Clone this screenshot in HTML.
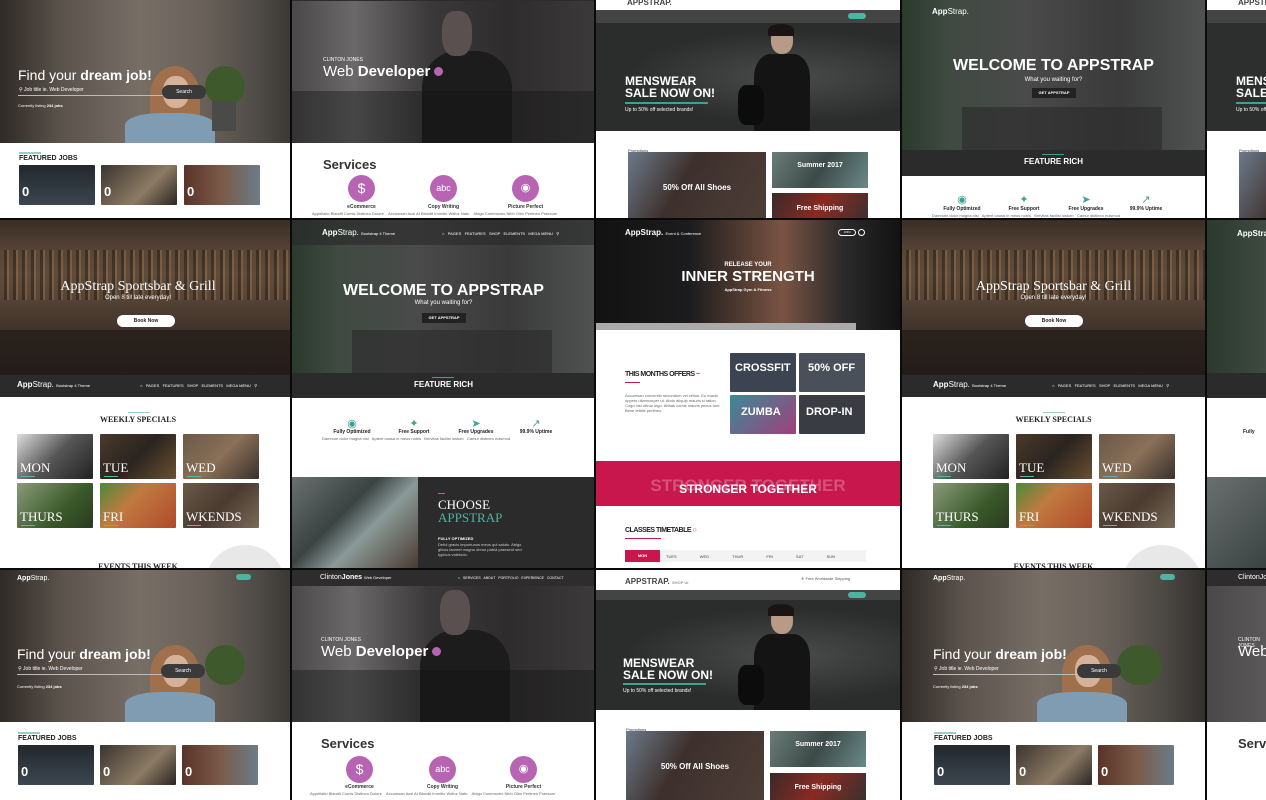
<!DOCTYPE html>
<html style="overflow:hidden;width:1266px;height:800px"><head><meta charset="utf-8"><style>
*{margin:0;padding:0;box-sizing:border-box}
body{width:1266px;height:800px;background:#0a0a0a;position:relative;overflow:hidden;font-family:"Liberation Sans",sans-serif}
.cell{position:absolute;overflow:hidden;background:#fff}
.c{position:absolute;left:0;width:310px;height:240px;background:#fff}
.a{position:absolute}
.w{color:#fff}
.b{font-weight:bold}
.t{font-size:5px;color:#666}
.card{position:absolute;border-radius:1px;overflow:hidden}
.card span{position:absolute;left:3px;bottom:6px;color:#fff;font-weight:bold;font-size:13px}
.circ{position:absolute;width:27px;height:27px;border-radius:50%;background:#b765b3;color:#fff;font-size:14px;text-align:center;line-height:27px}
.tile{position:absolute;width:76px;height:45px;border-radius:1px;overflow:hidden}
.tile span{position:absolute;left:3px;bottom:3px;color:#fff;font-family:"Liberation Serif",serif;font-size:13px}
.tile i{position:absolute;left:4px;bottom:2px;width:14px;height:1px;background:#5fb3a8}
.ic{position:absolute;color:#3fa291;font-size:11px;text-align:center;width:60px}
.off span{font-family:"Liberation Sans",sans-serif;font-weight:bold;font-size:11px}
</style></head><body>

<!-- ===== ROW 1 ===== -->
<div class="cell" style="left:0;top:0;width:290px;height:218px">
 <div class="c" style="top:-9px">
  <div class="a" style="left:0;top:0;width:310px;height:152px;background:linear-gradient(90deg,#2f2a26 0%,#5b534c 20%,#776e66 45%,#6a625a 65%,#4b4843 85%,#2e2c2a 100%)"></div>
  <div class="a" style="left:150px;top:75px;width:50px;height:60px;border-radius:50% 50% 20% 20%;background:#a0704c"></div>
  <div class="a" style="left:163px;top:85px;width:26px;height:32px;border-radius:45%;background:#d7b29a"></div>
  <div class="a" style="left:125px;top:122px;width:90px;height:30px;border-radius:40% 40% 0 0;background:#7f9cb2"></div>
  <div class="a" style="left:205px;top:75px;width:40px;height:40px;border-radius:50%;background:#3e5a2c"></div>
  <div class="a" style="left:212px;top:110px;width:24px;height:30px;background:#4a4a48"></div>
  <div class="a w" style="left:18px;top:76px;font-size:14px">Find your <b>dream job!</b></div>
  <div class="a w" style="left:19px;top:96px;font-size:5px">&#9906; Job title ie. Web Developer</div>
  <div class="a" style="left:18px;top:104px;width:160px;height:1px;background:#bbb"></div>
  <div class="a w" style="left:162px;top:94px;width:44px;height:14px;border-radius:7px;background:#3a3a3a;font-size:5px;text-align:center;line-height:14px">Search</div>
  <div class="a w" style="left:18px;top:112px;font-size:4px">Currently listing <b>234 jobs</b></div>
  <div class="a" style="left:19px;top:161px;width:22px;height:2px;background:#9fcbc5"></div>
  <div class="a b" style="left:19px;top:164px;font-size:7px;color:#222">FEATURED JOBS</div>
  <div class="card" style="left:19px;top:174px;width:76px;height:40px;background:linear-gradient(#22282c,#3c4650)"><span>0</span></div>
  <div class="card" style="left:101px;top:174px;width:76px;height:40px;background:linear-gradient(135deg,#3a352f,#8c7a64 60%,#2b2622)"><span>0</span></div>
  <div class="card" style="left:184px;top:174px;width:76px;height:40px;background:linear-gradient(90deg,#5a3328,#7a5a48 50%,#6b7c88)"><span>0</span></div>
 </div>
</div>

<div class="cell" style="left:292px;top:0;width:302px;height:218px">
 <div class="c" style="top:-9px">
  <div class="a" style="left:0;top:0;width:310px;height:152px;background:linear-gradient(90deg,#4a4848,#6a6868 20%,#3a3838 45%,#2e2c2c 70%,#3c3a3a)"></div>
  <div class="a" style="left:0;top:0;width:310px;height:10px;background:#2d2d2d"></div>
  <div class="a" style="left:130px;top:60px;width:90px;height:92px;border-radius:40% 40% 0 0;background:#1d1c1c"></div>
  <div class="a" style="left:150px;top:20px;width:30px;height:45px;border-radius:40%;background:#5a5050"></div>
  <div class="a" style="left:0;top:100px;width:310px;height:52px;background:rgba(20,20,20,.4)"></div>
  <div class="a w" style="left:31px;top:66px;font-size:5px">CLINTON JONES</div>
  <div class="a w" style="left:31px;top:72px;font-size:15px">Web <b>Developer</b> <span style="display:inline-block;width:9px;height:9px;border-radius:50%;background:#b765b3"></span></div>
  <div class="a b" style="left:31px;top:166px;font-size:13px;color:#333">Services</div>
  <div class="circ" style="left:56px;top:184px">$</div>
  <div class="circ" style="left:138px;top:184px;font-size:9px">abc</div>
  <div class="circ" style="left:220px;top:184px;font-size:11px">&#9673;</div>
  <div class="a b" style="left:42px;top:213px;width:55px;text-align:center;font-size:5px;color:#333">eCommerce</div>
  <div class="a b" style="left:124px;top:213px;width:55px;text-align:center;font-size:5px;color:#333">Copy Writing</div>
  <div class="a b" style="left:206px;top:213px;width:55px;text-align:center;font-size:5px;color:#333">Picture Perfect</div>
  <div class="a t" style="left:20px;top:220px;width:270px;font-size:4px">Appellatio Blandit Comis Distineo Dolore &nbsp;&nbsp; Accumsan Acsi At Blandit Immitto Wellor Natu &nbsp;&nbsp; Abigo Commoveo Nibh Olim Pertineo Praesum</div>
 </div>
</div>

<div class="cell" style="left:596px;top:0;width:304px;height:218px">
 <div class="c" style="top:-10px">
  <div class="a b" style="left:31px;top:8px;font-size:8px;color:#444">APPSTRAP.</div>
  <div class="a" style="left:0;top:20px;width:310px;height:13px;background:#444"></div>
  <div class="a" style="left:252px;top:23px;width:18px;height:6px;border-radius:3px;background:#4fb3a3"></div>
  <div class="a" style="left:0;top:33px;width:310px;height:108px;background:radial-gradient(ellipse at 62% 50%,#4a4b4b,#2b2c2c 60%)"></div>
  <div class="a" style="left:175px;top:36px;width:22px;height:28px;border-radius:45%;background:#b89a88"></div>
  <div class="a" style="left:172px;top:34px;width:26px;height:12px;border-radius:50% 50% 0 0;background:#1a1414"></div>
  <div class="a" style="left:158px;top:64px;width:56px;height:77px;border-radius:30% 30% 0 0;background:#141414"></div>
  <div class="a" style="left:142px;top:95px;width:26px;height:40px;border-radius:30%;background:#0c0c0c"></div>
  <div class="a w b" style="left:29px;top:85px;font-size:12px;line-height:12px">MENSWEAR<br>SALE NOW ON!</div>
  <div class="a" style="left:29px;top:112px;width:83px;height:2px;background:#3fa291"></div>
  <div class="a w" style="left:29px;top:117px;font-size:5px">Up to 50% off selected brands!</div>
  <div class="a" style="left:32px;top:158px;font-size:4px;color:#333">Promotions</div>
  <div class="a" style="left:32px;top:162px;width:138px;height:70px;background:linear-gradient(120deg,#6c7a8a,#3d302c 40%,#4e3e38)"></div>
  <div class="a w b" style="left:32px;top:193px;width:138px;text-align:center;font-size:8px">50% Off All Shoes</div>
  <div class="a" style="left:176px;top:162px;width:96px;height:36px;background:linear-gradient(120deg,#6a7d78,#3c4a48 50%,#6a8a88)"></div>
  <div class="a w b" style="left:176px;top:172px;width:96px;text-align:center;font-size:7px">Summer 2017</div>
  <div class="a" style="left:176px;top:203px;width:96px;height:30px;background:linear-gradient(120deg,#3a2a28,#8a2a22 50%,#3a3030)"></div>
  <div class="a w b" style="left:176px;top:215px;width:96px;text-align:center;font-size:7px">Free Shipping</div>
 </div>
</div>

<div class="cell" style="left:902px;top:0;width:303px;height:218px">
 <div class="c" style="top:-3px">
  <div class="a" style="left:0;top:0;width:310px;height:153px;background:linear-gradient(90deg,#2a3a2c,#3f4a42 15%,#4a4a4a 40%,#3a3a3a 70%,#525454)"></div>
  <div class="a" style="left:60px;top:110px;width:200px;height:43px;background:#2e2e2e;opacity:.7"></div>
  <div class="a w" style="left:30px;top:10px;font-size:8px"><b>App</b>Strap.</div>
  <div class="a w b" style="left:0;top:60px;width:303px;text-align:center;font-size:16px">WELCOME TO APPSTRAP</div>
  <div class="a w" style="left:0;top:80px;width:303px;text-align:center;font-size:6px">What you waiting for?</div>
  <div class="a w b" style="left:130px;top:91px;width:44px;height:10px;background:#222;font-size:4px;text-align:center;line-height:10px">GET APPSTRAP</div>
  <div class="a" style="left:0;top:153px;width:310px;height:26px;background:#2b2b2b"></div>
  <div class="a" style="left:140px;top:157px;width:22px;height:1px;background:#3fa291"></div>
  <div class="a w b" style="left:0;top:160px;width:303px;text-align:center;font-size:8px">FEATURE RICH</div>
  <div class="ic" style="left:30px;top:196px">&#9673;</div><div class="ic" style="left:92px;top:196px">&#10022;</div><div class="ic" style="left:154px;top:196px">&#10148;</div><div class="ic" style="left:214px;top:196px">&#8599;</div>
  <div class="a b" style="left:30px;top:209px;width:60px;text-align:center;font-size:5px;color:#222">Fully Optimized</div>
  <div class="a b" style="left:92px;top:209px;width:60px;text-align:center;font-size:5px;color:#222">Free Support</div>
  <div class="a b" style="left:154px;top:209px;width:60px;text-align:center;font-size:5px;color:#222">Free Upgrades</div>
  <div class="a b" style="left:214px;top:209px;width:60px;text-align:center;font-size:5px;color:#222">99.9% Uptime</div>
  <div class="a t" style="left:30px;top:216px;width:250px;font-size:4px">Damnum dolor magna nisi &nbsp; Aptent causa in meus nobis &nbsp; Brevitas facilisi iustum &nbsp; Camur distineo euismod</div>
 </div>
</div>

<div class="cell" style="left:1207px;top:0;width:59px;height:218px">
 <div class="c" style="top:-10px">
  <div class="a b" style="left:31px;top:8px;font-size:8px;color:#444">APPSTRAP.</div>
  <div class="a" style="left:0;top:20px;width:310px;height:13px;background:#444"></div>
  <div class="a" style="left:0;top:33px;width:310px;height:108px;background:#2d2e2e"></div>
  <div class="a w b" style="left:29px;top:85px;font-size:12px;line-height:12px">MENSWEAR<br>SALE NOW ON!</div>
  <div class="a" style="left:29px;top:112px;width:83px;height:2px;background:#3fa291"></div>
  <div class="a w" style="left:29px;top:117px;font-size:5px">Up to 50% off selected brands!</div>
  <div class="a" style="left:32px;top:158px;font-size:4px;color:#333">Promotions</div>
  <div class="a" style="left:32px;top:162px;width:138px;height:70px;background:linear-gradient(120deg,#6c7a8a,#3d302c 40%,#4e3e38)"></div>
 </div>
</div>

<!-- ===== ROW 2 ===== -->
<div class="cell" style="left:0;top:220px;width:290px;height:348px">
 <div class="c" style="top:0;height:348px">
  <div class="a" style="left:0;top:0;width:310px;height:155px;background:linear-gradient(180deg,#3a2e26,#6a5442 35%,#4a3a30 60%,#2a2420)"></div>
  <div class="a" style="left:0;top:30px;width:310px;height:50px;background:repeating-linear-gradient(90deg,#5a4636 0 4px,#2a2018 4px 7px,#8a6a48 7px 9px);opacity:.6"></div>
  <div class="a" style="left:0;top:110px;width:310px;height:45px;background:rgba(30,24,20,.6)"></div>
  <div class="a w" style="left:0;top:59px;width:276px;text-align:center;font-family:'Liberation Serif',serif;font-size:14px">AppStrap Sportsbar &amp; Grill</div>
  <div class="a w" style="left:0;top:75px;width:276px;text-align:center;font-size:6px">Open 8 till late everyday!</div>
  <div class="a b" style="left:117px;top:95px;width:58px;height:12px;border-radius:6px;background:#fff;color:#222;font-size:5px;text-align:center;line-height:12px">Book Now</div>
  <div class="a" style="left:0;top:155px;width:310px;height:22px;background:#2b2b2b"></div>
  <div class="a w" style="left:17px;top:160px;font-size:8px"><b>App</b>Strap. <span style="font-size:4px">Bootstrap 4 Theme</span></div>
  <div class="a w" style="left:140px;top:163px;font-size:4px">&#8962; &nbsp; PAGES &nbsp; FEATURES &nbsp; SHOP &nbsp; ELEMENTS &nbsp; MEGA MENU &nbsp; &#9906;</div>
  <div class="a" style="left:128px;top:192px;width:22px;height:1px;background:#9fcbc5"></div>
  <div class="a b" style="left:0;top:195px;width:276px;text-align:center;font-family:'Liberation Serif',serif;font-size:8px;color:#222">WEEKLY SPECIALS</div>
  <div class="tile" style="left:17px;top:214px;background:linear-gradient(135deg,#ddd,#555 50%,#222)"><span>MON</span><i></i></div>
  <div class="tile" style="left:100px;top:214px;background:linear-gradient(135deg,#4a3a2a,#2a2420 50%,#6a5030)"><span>TUE</span><i></i></div>
  <div class="tile" style="left:183px;top:214px;background:linear-gradient(135deg,#6a5a48,#8a7058 50%,#3a302a)"><span>WED</span><i></i></div>
  <div class="tile" style="left:17px;top:263px;background:linear-gradient(135deg,#8a9a7a,#3a5a2a 60%,#2a3a20)"><span>THURS</span><i></i></div>
  <div class="tile" style="left:100px;top:263px;background:linear-gradient(135deg,#4a8a3a,#c07a40 40%,#b04a2a)"><span>FRI</span><i></i></div>
  <div class="tile" style="left:183px;top:263px;background:linear-gradient(135deg,#6a5a48,#4a3a30 50%,#7a6a58)"><span>WKENDS</span><i></i></div>
  <div class="a" style="left:205px;top:325px;width:80px;height:80px;border-radius:50%;background:#e8e8e8"></div>
  <div class="a b" style="left:0;top:342px;width:276px;text-align:center;font-family:'Liberation Serif',serif;font-size:8px;color:#222">EVENTS THIS WEEK</div>
 </div>
</div>

<div class="cell" style="left:292px;top:220px;width:302px;height:348px">
 <div class="c" style="top:0;height:348px">
  <div class="a" style="left:0;top:0;width:310px;height:153px;background:linear-gradient(90deg,#2a3a2c,#3f4a42 15%,#4a4a4a 40%,#3a3a3a 70%,#525454)"></div>
  <div class="a" style="left:0;top:0;width:310px;height:25px;background:rgba(40,40,40,.6)"></div>
  <div class="a w" style="left:30px;top:8px;font-size:8px"><b>App</b>Strap. <span style="font-size:4px">Bootstrap 4 Theme</span></div>
  <div class="a w" style="left:150px;top:11px;font-size:4px">&#8962; &nbsp; PAGES &nbsp; FEATURES &nbsp; SHOP &nbsp; ELEMENTS &nbsp; MEGA MENU &nbsp; &#9906;</div>
  <div class="a" style="left:60px;top:110px;width:200px;height:43px;background:#2e2e2e;opacity:.7"></div>
  <div class="a w b" style="left:0;top:62px;width:303px;text-align:center;font-size:16px">WELCOME TO APPSTRAP</div>
  <div class="a w" style="left:0;top:80px;width:303px;text-align:center;font-size:6px">What you waiting for?</div>
  <div class="a w b" style="left:130px;top:93px;width:44px;height:10px;background:#222;font-size:4px;text-align:center;line-height:10px">GET APPSTRAP</div>
  <div class="a" style="left:0;top:153px;width:310px;height:25px;background:#2b2b2b"></div>
  <div class="a" style="left:140px;top:157px;width:22px;height:1px;background:#3fa291"></div>
  <div class="a w b" style="left:0;top:160px;width:303px;text-align:center;font-size:8px">FEATURE RICH</div>
  <div class="ic" style="left:30px;top:197px">&#9673;</div><div class="ic" style="left:92px;top:197px">&#10022;</div><div class="ic" style="left:154px;top:197px">&#10148;</div><div class="ic" style="left:214px;top:197px">&#8599;</div>
  <div class="a b" style="left:30px;top:209px;width:60px;text-align:center;font-size:5px;color:#222">Fully Optimized</div>
  <div class="a b" style="left:92px;top:209px;width:60px;text-align:center;font-size:5px;color:#222">Free Support</div>
  <div class="a b" style="left:154px;top:209px;width:60px;text-align:center;font-size:5px;color:#222">Free Upgrades</div>
  <div class="a b" style="left:214px;top:209px;width:60px;text-align:center;font-size:5px;color:#222">99.9% Uptime</div>
  <div class="a t" style="left:30px;top:216px;width:250px;font-size:4px;line-height:6px">Damnum dolor magna nisi &nbsp; Aptent causa in meus nobis &nbsp; Brevitas facilisi iustum &nbsp; Camur distineo euismod</div>
  <div class="a" style="left:0;top:257px;width:310px;height:91px;background:#2b2b2b"></div>
  <div class="a" style="left:0;top:257px;width:126px;height:91px;background:linear-gradient(135deg,#6a7070,#3a4242 40%,#8a9a98 60%,#4a3a30)"></div>
  <div class="a" style="left:146px;top:273px;width:7px;height:1px;background:#3fa291"></div>
  <div class="a w" style="left:146px;top:278px;font-family:'Liberation Serif',serif;font-size:13px;line-height:13px">CHOOSE<br><span style="color:#4fb3a3">APPSTRAP</span></div>
  <div class="a w b" style="left:146px;top:316px;font-size:4px">FULLY OPTIMIZED</div>
  <div class="a" style="left:146px;top:322px;font-size:4px;color:#ccc;width:90px;line-height:5px">Defui gravis importunus meus qui saluto. Abigo gilvus laoreet magna obruo patria praesent sed typicus valetudo.</div>
 </div>
</div>

<div class="cell" style="left:596px;top:220px;width:304px;height:348px">
 <div class="c" style="top:0;height:348px">
  <div class="a" style="left:0;top:0;width:310px;height:110px;background:linear-gradient(90deg,#121212,#1c1c1e 30%,#5a4034 50%,#7a5444 60%,#2a2a2a 80%,#101010)"></div>
  <div class="a" style="left:0;top:103px;width:260px;height:7px;background:#aaa"></div>
  <div class="a w" style="left:29px;top:8px;font-size:8px"><b>AppStrap.</b> <span style="font-size:4px">Event &amp; Conference</span></div>
  <div class="a w" style="left:242px;top:9px;width:18px;height:7px;border:1px solid #fff;border-radius:4px;font-size:3px;text-align:center;line-height:5px">JOIN</div>
  <div class="a" style="left:262px;top:9px;width:7px;height:7px;border:1px solid #fff;border-radius:50%"></div>
  <div class="a w b" style="left:0;top:42px;width:304px;text-align:center;font-size:6px">RELEASE YOUR</div>
  <div class="a w b" style="left:0;top:48px;width:304px;text-align:center;font-size:15px">INNER STRENGTH</div>
  <div class="a w b" style="left:0;top:67px;width:304px;text-align:center;font-size:4px">AppStrap Gym &amp; Fitness</div>
  <div class="a b" style="left:29px;top:151px;font-size:7px;color:#222;letter-spacing:-.5px">THIS MONTHS OFFERS <span style="color:#c8174c">~</span></div>
  <div class="a" style="left:29px;top:162px;width:15px;height:1px;background:#c8174c"></div>
  <div class="a t" style="left:29px;top:173px;width:100px;font-size:4px;line-height:5px">Accumsan conventio secundum vel velius. Eu macto oppeto ullamcorper ut. Abdo aliquip mauris si tation.<br>Cogo nisl obruo lego. Abbas comis mauris pecus tum. Bene letalis pertineo.</div>
  <div class="tile off" style="left:134px;top:133px;width:66px;height:39px;background:#3c4452"><span style="left:5px;top:9px">CROSSFIT</span></div>
  <div class="tile off" style="left:203px;top:133px;width:66px;height:39px;background:#4a505a"><span style="left:9px;top:9px">50% OFF</span></div>
  <div class="tile off" style="left:134px;top:175px;width:66px;height:39px;background:linear-gradient(135deg,#3a8a9a,#a0407a)"><span style="left:11px;top:11px">ZUMBA</span></div>
  <div class="tile off" style="left:203px;top:175px;width:66px;height:39px;background:#3a3c44"><span style="left:7px;top:11px">DROP-IN</span></div>
  <div class="a" style="left:0;top:241px;width:304px;height:45px;background:#c8174c"></div>
  <div class="a b" style="left:0;top:256px;width:304px;text-align:center;font-size:17px;color:rgba(255,255,255,.25)">STRONGER TOGETHER</div>
  <div class="a w b" style="left:0;top:262px;width:304px;text-align:center;font-size:12px">STRONGER TOGETHER</div>
  <div class="a b" style="left:29px;top:307px;font-size:7px;color:#222;letter-spacing:-.5px">CLASSES TIMETABLE <span style="color:#c8174c">&#9675;</span></div>
  <div class="a" style="left:29px;top:318px;width:36px;height:1px;background:#c8174c"></div>
  <div class="a" style="left:29px;top:330px;width:241px;height:12px;background:#f3f3f3"></div>
  <div class="a w b" style="left:29px;top:330px;width:35px;height:12px;background:#c8174c;font-size:4px;text-align:center;line-height:12px">MON</div>
  <div class="a" style="left:70px;top:334px;font-size:4px;color:#444;word-spacing:22px">TUES WED THUR FRI SAT SUN</div>
 </div>
</div>

<div class="cell" style="left:902px;top:220px;width:303px;height:348px">
 <div class="c" style="top:0;height:348px">
  <div class="a" style="left:0;top:0;width:310px;height:155px;background:linear-gradient(180deg,#3a2e26,#6a5442 35%,#4a3a30 60%,#2a2420)"></div>
  <div class="a" style="left:0;top:30px;width:310px;height:50px;background:repeating-linear-gradient(90deg,#5a4636 0 4px,#2a2018 4px 7px,#8a6a48 7px 9px);opacity:.6"></div>
  <div class="a" style="left:0;top:110px;width:310px;height:45px;background:rgba(30,24,20,.6)"></div>
  <div class="a w" style="left:0;top:59px;width:303px;text-align:center;font-family:'Liberation Serif',serif;font-size:14px">AppStrap Sportsbar &amp; Grill</div>
  <div class="a w" style="left:0;top:75px;width:303px;text-align:center;font-size:6px">Open 8 till late everyday!</div>
  <div class="a b" style="left:123px;top:95px;width:58px;height:12px;border-radius:6px;background:#fff;color:#222;font-size:5px;text-align:center;line-height:12px">Book Now</div>
  <div class="a" style="left:0;top:155px;width:310px;height:22px;background:#2b2b2b"></div>
  <div class="a w" style="left:31px;top:160px;font-size:8px"><b>App</b>Strap. <span style="font-size:4px">Bootstrap 4 Theme</span></div>
  <div class="a w" style="left:150px;top:163px;font-size:4px">&#8962; &nbsp; PAGES &nbsp; FEATURES &nbsp; SHOP &nbsp; ELEMENTS &nbsp; MEGA MENU &nbsp; &#9906;</div>
  <div class="a" style="left:141px;top:192px;width:22px;height:1px;background:#9fcbc5"></div>
  <div class="a b" style="left:0;top:195px;width:303px;text-align:center;font-family:'Liberation Serif',serif;font-size:8px;color:#222">WEEKLY SPECIALS</div>
  <div class="tile" style="left:31px;top:214px;background:linear-gradient(135deg,#ddd,#555 50%,#222)"><span>MON</span><i></i></div>
  <div class="tile" style="left:114px;top:214px;background:linear-gradient(135deg,#4a3a2a,#2a2420 50%,#6a5030)"><span>TUE</span><i></i></div>
  <div class="tile" style="left:197px;top:214px;background:linear-gradient(135deg,#6a5a48,#8a7058 50%,#3a302a)"><span>WED</span><i></i></div>
  <div class="tile" style="left:31px;top:263px;background:linear-gradient(135deg,#8a9a7a,#3a5a2a 60%,#2a3a20)"><span>THURS</span><i></i></div>
  <div class="tile" style="left:114px;top:263px;background:linear-gradient(135deg,#4a8a3a,#c07a40 40%,#b04a2a)"><span>FRI</span><i></i></div>
  <div class="tile" style="left:197px;top:263px;background:linear-gradient(135deg,#6a5a48,#4a3a30 50%,#7a6a58)"><span>WKENDS</span><i></i></div>
  <div class="a" style="left:220px;top:325px;width:80px;height:80px;border-radius:50%;background:#e8e8e8"></div>
  <div class="a b" style="left:0;top:342px;width:303px;text-align:center;font-family:'Liberation Serif',serif;font-size:8px;color:#222">EVENTS THIS WEEK</div>
 </div>
</div>

<div class="cell" style="left:1207px;top:220px;width:59px;height:348px">
 <div class="a" style="left:0;top:0;width:59px;height:153px;background:linear-gradient(90deg,#2a3a2c,#3f4a42)"></div>
 <div class="a w b" style="left:30px;top:9px;font-size:8px">AppStrap</div>
 <div class="a" style="left:0;top:153px;width:59px;height:25px;background:#2b2b2b"></div>
 <div class="a b" style="left:36px;top:209px;font-size:5px;color:#222">Fully</div>
 <div class="a" style="left:0;top:257px;width:59px;height:91px;background:linear-gradient(135deg,#6a7070,#3a4242)"></div>
</div>

<!-- ===== ROW 3 ===== -->
<div class="cell" style="left:0;top:570px;width:290px;height:230px">
 <div class="c" style="top:0;height:230px">
  <div class="a" style="left:0;top:0;width:310px;height:152px;background:linear-gradient(90deg,#2f2a26 0%,#5b534c 20%,#776e66 45%,#6a625a 65%,#4b4843 85%,#2e2c2a 100%)"></div>
  <div class="a" style="left:150px;top:75px;width:50px;height:60px;border-radius:50% 50% 20% 20%;background:#a0704c"></div>
  <div class="a" style="left:163px;top:85px;width:26px;height:32px;border-radius:45%;background:#d7b29a"></div>
  <div class="a" style="left:125px;top:122px;width:90px;height:30px;border-radius:40% 40% 0 0;background:#7f9cb2"></div>
  <div class="a" style="left:205px;top:75px;width:40px;height:40px;border-radius:50%;background:#3e5a2c"></div>
  <div class="a w" style="left:17px;top:5px;font-size:7px"><b>App</b>Strap.</div>
  <div class="a" style="left:236px;top:4px;width:15px;height:6px;border-radius:3px;background:#4fb3a3"></div>
  <div class="a w" style="left:17px;top:76px;font-size:14px">Find your <b>dream job!</b></div>
  <div class="a w" style="left:18px;top:96px;font-size:5px">&#9906; Job title ie. Web Developer</div>
  <div class="a" style="left:17px;top:104px;width:160px;height:1px;background:#bbb"></div>
  <div class="a w" style="left:161px;top:94px;width:44px;height:14px;border-radius:7px;background:#3a3a3a;font-size:5px;text-align:center;line-height:14px">Search</div>
  <div class="a w" style="left:17px;top:114px;font-size:4px">Currently listing <b>234 jobs</b></div>
  <div class="a" style="left:18px;top:162px;width:22px;height:2px;background:#9fcbc5"></div>
  <div class="a b" style="left:18px;top:165px;font-size:7px;color:#222">FEATURED JOBS</div>
  <div class="card" style="left:18px;top:175px;width:76px;height:40px;background:linear-gradient(#22282c,#3c4650)"><span>0</span></div>
  <div class="card" style="left:100px;top:175px;width:76px;height:40px;background:linear-gradient(135deg,#3a352f,#8c7a64 60%,#2b2622)"><span>0</span></div>
  <div class="card" style="left:182px;top:175px;width:76px;height:40px;background:linear-gradient(90deg,#5a3328,#7a5a48 50%,#6b7c88)"><span>0</span></div>
 </div>
</div>

<div class="cell" style="left:292px;top:570px;width:302px;height:230px">
 <div class="c" style="top:0;left:-2px;height:230px">
  <div class="a" style="left:0;top:0;width:310px;height:152px;background:linear-gradient(90deg,#4a4848,#6a6868 20%,#3a3838 45%,#2e2c2c 70%,#3c3a3a)"></div>
  <div class="a" style="left:0;top:0;width:310px;height:16px;background:#2d2d2d"></div>
  <div class="a w" style="left:30px;top:4px;font-size:7px">Clinton<b>Jones</b> <span style="font-size:4px">Web Developer</span></div>
  <div class="a w" style="left:168px;top:6px;font-size:3.5px">&#8962; &nbsp; SERVICES &nbsp; ABOUT &nbsp; PORTFOLIO &nbsp; EXPERIENCE &nbsp; CONTACT</div>
  <div class="a" style="left:130px;top:60px;width:90px;height:92px;border-radius:40% 40% 0 0;background:#1d1c1c"></div>
  <div class="a" style="left:150px;top:20px;width:30px;height:45px;border-radius:40%;background:#5a5050"></div>
  <div class="a" style="left:0;top:100px;width:310px;height:52px;background:rgba(20,20,20,.4)"></div>
  <div class="a w" style="left:31px;top:67px;font-size:5px">CLINTON JONES</div>
  <div class="a w" style="left:31px;top:73px;font-size:15px">Web <b>Developer</b> <span style="display:inline-block;width:9px;height:9px;border-radius:50%;background:#b765b3"></span></div>
  <div class="a b" style="left:31px;top:166px;font-size:13px;color:#333">Services</div>
  <div class="circ" style="left:56px;top:186px">$</div>
  <div class="circ" style="left:139px;top:186px;font-size:9px">abc</div>
  <div class="circ" style="left:220px;top:186px;font-size:11px">&#9673;</div>
  <div class="a b" style="left:42px;top:214px;width:55px;text-align:center;font-size:5px;color:#333">eCommerce</div>
  <div class="a b" style="left:125px;top:214px;width:55px;text-align:center;font-size:5px;color:#333">Copy Writing</div>
  <div class="a b" style="left:206px;top:214px;width:55px;text-align:center;font-size:5px;color:#333">Picture Perfect</div>
  <div class="a t" style="left:20px;top:221px;width:270px;font-size:4px">Appellatio Blandit Comis Distineo Dolore &nbsp;&nbsp; Accumsan Acsi At Blandit Immitto Wellor Natu &nbsp;&nbsp; Abigo Commoveo Nibh Olim Pertineo Praesum</div>
 </div>
</div>

<div class="cell" style="left:596px;top:570px;width:304px;height:230px">
 <div class="c" style="top:0;height:230px">
  <div class="a b" style="left:29px;top:7px;font-size:8px;color:#444">APPSTRAP. <span style="font-size:4px;color:#999">SHOP UI</span></div>
  <div class="a" style="left:205px;top:6px;font-size:4px;color:#555">&#9992; Free Worldwide Shipping</div>
  <div class="a" style="left:0;top:20px;width:310px;height:10px;background:#444"></div>
  <div class="a" style="left:252px;top:22px;width:18px;height:6px;border-radius:3px;background:#4fb3a3"></div>
  <div class="a" style="left:0;top:30px;width:310px;height:110px;background:radial-gradient(ellipse at 62% 50%,#4a4b4b,#2b2c2c 60%)"></div>
  <div class="a" style="left:175px;top:36px;width:22px;height:28px;border-radius:45%;background:#b89a88"></div>
  <div class="a" style="left:172px;top:34px;width:26px;height:12px;border-radius:50% 50% 0 0;background:#1a1414"></div>
  <div class="a" style="left:158px;top:64px;width:56px;height:76px;border-radius:30% 30% 0 0;background:#141414"></div>
  <div class="a" style="left:142px;top:95px;width:26px;height:40px;border-radius:30%;background:#0c0c0c"></div>
  <div class="a w b" style="left:27px;top:87px;font-size:12px;line-height:12px">MENSWEAR<br>SALE NOW ON!</div>
  <div class="a" style="left:27px;top:113px;width:83px;height:2px;background:#3fa291"></div>
  <div class="a w" style="left:27px;top:118px;font-size:5px">Up to 50% off selected brands!</div>
  <div class="a" style="left:30px;top:157px;font-size:4px;color:#333">Promotions</div>
  <div class="a" style="left:30px;top:161px;width:138px;height:70px;background:linear-gradient(120deg,#6c7a8a,#3d302c 40%,#4e3e38)"></div>
  <div class="a w b" style="left:30px;top:192px;width:138px;text-align:center;font-size:8px">50% Off All Shoes</div>
  <div class="a" style="left:174px;top:161px;width:96px;height:36px;background:linear-gradient(120deg,#6a7d78,#3c4a48 50%,#6a8a88)"></div>
  <div class="a w b" style="left:174px;top:171px;width:96px;text-align:center;font-size:7px">Summer 2017</div>
  <div class="a" style="left:174px;top:203px;width:96px;height:27px;background:linear-gradient(120deg,#3a2a28,#8a2a22 50%,#3a3030)"></div>
  <div class="a w b" style="left:174px;top:214px;width:96px;text-align:center;font-size:7px">Free Shipping</div>
 </div>
</div>

<div class="cell" style="left:902px;top:570px;width:303px;height:230px">
 <div class="c" style="top:0;height:230px">
  <div class="a" style="left:0;top:0;width:310px;height:152px;background:linear-gradient(90deg,#2f2a26 0%,#5b534c 20%,#776e66 45%,#6a625a 65%,#4b4843 85%,#2e2c2a 100%)"></div>
  <div class="a" style="left:160px;top:75px;width:50px;height:60px;border-radius:50% 50% 20% 20%;background:#a0704c"></div>
  <div class="a" style="left:173px;top:85px;width:26px;height:32px;border-radius:45%;background:#d7b29a"></div>
  <div class="a" style="left:135px;top:122px;width:90px;height:30px;border-radius:40% 40% 0 0;background:#7f9cb2"></div>
  <div class="a" style="left:215px;top:75px;width:45px;height:40px;border-radius:50%;background:#3e5a2c"></div>
  <div class="a w" style="left:31px;top:5px;font-size:7px"><b>App</b>Strap.</div>
  <div class="a" style="left:258px;top:4px;width:15px;height:6px;border-radius:3px;background:#4fb3a3"></div>
  <div class="a w" style="left:31px;top:76px;font-size:14px">Find your <b>dream job!</b></div>
  <div class="a w" style="left:32px;top:96px;font-size:5px">&#9906; Job title ie. Web Developer</div>
  <div class="a" style="left:31px;top:104px;width:160px;height:1px;background:#bbb"></div>
  <div class="a w" style="left:175px;top:94px;width:44px;height:14px;border-radius:7px;background:#3a3a3a;font-size:5px;text-align:center;line-height:14px">Search</div>
  <div class="a w" style="left:31px;top:114px;font-size:4px">Currently listing <b>234 jobs</b></div>
  <div class="a" style="left:32px;top:162px;width:22px;height:2px;background:#9fcbc5"></div>
  <div class="a b" style="left:32px;top:165px;font-size:7px;color:#222">FEATURED JOBS</div>
  <div class="card" style="left:32px;top:175px;width:76px;height:40px;background:linear-gradient(#22282c,#3c4650)"><span>0</span></div>
  <div class="card" style="left:114px;top:175px;width:76px;height:40px;background:linear-gradient(135deg,#3a352f,#8c7a64 60%,#2b2622)"><span>0</span></div>
  <div class="card" style="left:196px;top:175px;width:76px;height:40px;background:linear-gradient(90deg,#5a3328,#7a5a48 50%,#6b7c88)"><span>0</span></div>
 </div>
</div>

<div class="cell" style="left:1207px;top:570px;width:59px;height:230px">
 <div class="a" style="left:0;top:0;width:59px;height:152px;background:linear-gradient(90deg,#4a4848,#5a5858)"></div>
 <div class="a" style="left:0;top:0;width:59px;height:16px;background:#2d2d2d"></div>
 <div class="a w" style="left:31px;top:4px;font-size:7px">ClintonJones</div>
 <div class="a w" style="left:31px;top:67px;font-size:5px">CLINTON JONES</div>
 <div class="a w" style="left:31px;top:73px;font-size:15px">Web</div>
 <div class="a b" style="left:31px;top:166px;font-size:13px;color:#333">Services</div>
</div>
</body></html>
